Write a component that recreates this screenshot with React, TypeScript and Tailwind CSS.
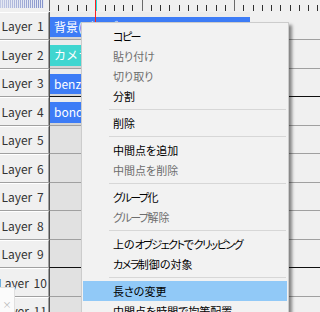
import React from "react";

type Obj = { text: string; color: string };
type Layer = { label: string; obj?: Obj; dark?: boolean };

const layers: Layer[] = [
  { label: "Layer 1", obj: { text: "背景(グラデーション)", color: "bg-[#3d7cf6]" } },
  { label: "Layer 2", obj: { text: "カメラ制御", color: "bg-[#3fd6d0]" } },
  { label: "Layer 3", obj: { text: "benzene", color: "bg-[#3d7cf6]" }, dark: true },
  { label: "Layer 4", obj: { text: "bond", color: "bg-[#3d7cf6]" } },
  { label: "Layer 5" },
  { label: "Layer 6" },
  { label: "Layer 7" },
  { label: "Layer 8" },
  { label: "Layer 9", dark: true },
  { label: "Layer 10" },
  { label: "Layer 11" },
];

type Item = { label: string; disabled?: boolean; active?: boolean } | "sep";

const menu: Item[] = [
  { label: "コピー" },
  { label: "貼り付け", disabled: true },
  { label: "切り取り", disabled: true },
  { label: "分割" },
  "sep",
  { label: "削除" },
  "sep",
  { label: "中間点を追加" },
  { label: "中間点を削除", disabled: true },
  "sep",
  { label: "グループ化" },
  { label: "グループ解除", disabled: true },
  "sep",
  { label: "上のオブジェクトでクリッピング" },
  { label: "カメラ制御の対象" },
  "sep",
  { label: "長さの変更", active: true },
  { label: "中間点を時間で均等配置" },
];

// katakana in the UI font are much narrower than in Noto, so squeeze them
function MenuText({ text }: { text: string }) {
  return (
    <>
      {text.split(/([\u30A0-\u30FF]+)/).map((part, i) =>
        /[\u30A0-\u30FF]/.test(part) ? (
          <span key={i} className="tracking-[-1.5px]">
            {part}
          </span>
        ) : (
          <span key={i}>{part}</span>
        )
      )}
    </>
  );
}

function Stripes() {
  // the little striped gauge in the top-left corner
  const lines = [];
  for (let i = 0; i < 22; i++) {
    lines.push(
      <rect key={i} x={i * 2} y={0} width={1} height={8} fill="#5a6cb8" opacity={0.25 + (i / 22) * 0.45} />
    );
  }
  return (
    <svg width="44" height="8" className="block">
      <rect x="0" y="0" width="44" height="8" fill="#e4e8f2" />
      {lines}
    </svg>
  );
}

function Ruler() {
  const ticks = [];
  for (let k = 0; k < 30; k++) {
    const x = Math.round(k * 9.25) + 0.5;
    const major = k % 10 === 0;
    ticks.push(
      <line key={k} x1={x} x2={x} y1={major ? 0 : 5} y2={11} stroke={major ? "#6a6a6a" : "#303030"} strokeWidth={1} />
    );
  }
  return (
    <svg width="271" height="12" className="block">
      {ticks}
    </svg>
  );
}

export default function App() {
  return (
    <div
      className="relative w-[320px] h-[312px] overflow-hidden bg-[#f0f0f0] select-none"
      style={{ fontFamily: '"Noto Sans CJK JP", "Noto Sans", sans-serif' }}
    >
      {/* ruler */}
      <div className="flex h-[12px]">
        <div className="w-[49px] shrink-0">
          <Stripes />
        </div>
        <Ruler />
      </div>

      {/* layers */}
      {layers.map((l, i) => (
        <div key={l.label} className={`flex ${i % 2 ? "h-[29px]" : "h-[28px]"}`}>
          <div className="w-[49px] shrink-0 flex items-center justify-center pr-[3px] bg-[#f0f0f0] border-t border-t-white border-b border-b-[#a0a0a0] border-r border-r-[#a0a0a0] text-[12px] text-[#333] whitespace-nowrap [word-spacing:2px]">
            {l.label}
          </div>
          <div
            className={`flex-1 flex border-l border-l-[#505050] border-b ${
              l.dark ? "border-b-[#101010]" : "border-b-[#a0a0a0]"
            }`}
          >
            <div className="w-[200px] shrink-0 bg-[#e1e1e1] flex flex-col">
              {l.obj && (
                <>
                  <div className="h-[5px] bg-[#ececec]" />
                  <div
                    className={`flex-1 ${l.obj.color} text-white text-[12px] leading-[20px] pl-[4px] whitespace-nowrap overflow-hidden`}
                  >
                    {l.obj.text}
                  </div>
                  <div className="h-[2px] bg-[#d4d4d4]" />
                </>
              )}
            </div>
            <div className="flex-1" />
          </div>
        </div>
      ))}

      {/* playhead */}
      <div className="absolute left-[95px] top-0 h-full w-[1px] bg-[#ff2020]" />
      <div className="absolute left-[96px] top-0 h-[11px] w-[1px] bg-[#20e0e0]" />

      {/* context menu */}
      <div className="absolute left-[81px] top-[22px] w-[208px] h-[320px] bg-[#f2f2f2] border border-[#cccccc] pt-[3px] px-[1px] shadow-[3px_3px_3px_rgba(0,0,0,0.45)] text-[11px] [font-feature-settings:'palt']">
        {menu.map((m, i) =>
          m === "sep" ? (
            <div key={i} className="h-[7px] flex items-center ml-[26px] mr-[1px]">
              <div className="h-[1px] w-full bg-[#d7d7d7]" />
            </div>
          ) : (
            <div
              key={i}
              className={`h-[20px] flex items-center pl-[30px] whitespace-nowrap ${
                m.active ? "bg-[#91c9f7]" : ""
              } ${m.disabled ? "text-[#6d6d6d]" : "text-black"}`}
            >
              <MenuText text={m.label} />
            </div>
          )
        )}
      </div>

      {/* small floating close box */}
      <div className="absolute left-0 top-[287px] w-[15px] h-[30px] bg-[#fbfbfb] border-t border-r border-[#e0e0e0] flex justify-center pt-[12px] text-[9px] leading-none text-[#b5b5b5]">
        ×
      </div>
    </div>
  );
}
